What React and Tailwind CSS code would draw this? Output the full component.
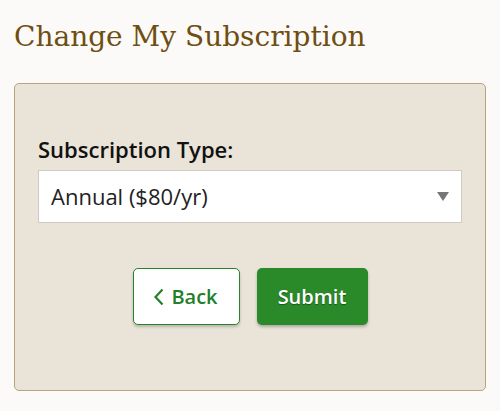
import React, { useState } from 'react';

export default function App() {
  const [plan, setPlan] = useState('annual');

  return (
    <div className="min-h-[411px] w-[500px] bg-[#fbfaf8] px-[14px] pt-[17px] font-['Open_Sans',sans-serif]">
      <h1 className="font-['DejaVu_Serif',serif] text-[28px] leading-[40px] text-[#6f4e12]">
        Change My Subscription
      </h1>

      <div className="mt-[26px] h-[308px] rounded-[5px] border-[1.5px] border-[#b9a47f] bg-[#e9e3d8] px-[23px] pt-[50px]">
        <label className="block text-[22px] font-semibold leading-[30px] text-[#111]">
          Subscription Type:
        </label>
        <div className="relative mt-[6px]">
          <select
            value={plan}
            onChange={(e) => setPlan(e.target.value)}
            className="h-[53px] w-full appearance-none rounded-none border border-[#cfcac2] bg-white pl-[12px] text-[22px] text-[#222] outline-none"
          >
            <option value="annual">Annual ($80/yr)</option>
            <option value="monthly">Monthly ($8/mo)</option>
          </select>
          <svg className="pointer-events-none absolute right-[13px] top-[22px]" width="12" height="9" viewBox="0 0 12 9">
            <path d="M0 0h12L6 9z" fill="#777" />
          </svg>
        </div>

        <div className="mt-[45px] flex justify-center gap-[17px]">
          <button className="flex h-[57px] w-[107px] items-center justify-center gap-[7px] rounded-[5px] border-[1.5px] border-[#2a832a] bg-white text-[20px] font-semibold text-[#23802a] shadow-[0_2px_3px_rgba(0,0,0,0.2)]">
            <svg width="10" height="18" viewBox="0 0 10 18">
              <path d="M8.5 1.5L1.5 9l7 7.5" fill="none" stroke="#23802a" strokeWidth="2.2" />
            </svg>
            Back
          </button>
          <button className="h-[57px] w-[111px] rounded-[5px] bg-[#2a8a2a] text-[20px] font-semibold text-white shadow-[0_2px_3px_rgba(0,0,0,0.25)] [text-shadow:0_1px_1px_rgba(0,0,0,0.4)]">
            Submit
          </button>
        </div>
      </div>
    </div>
  );
}
